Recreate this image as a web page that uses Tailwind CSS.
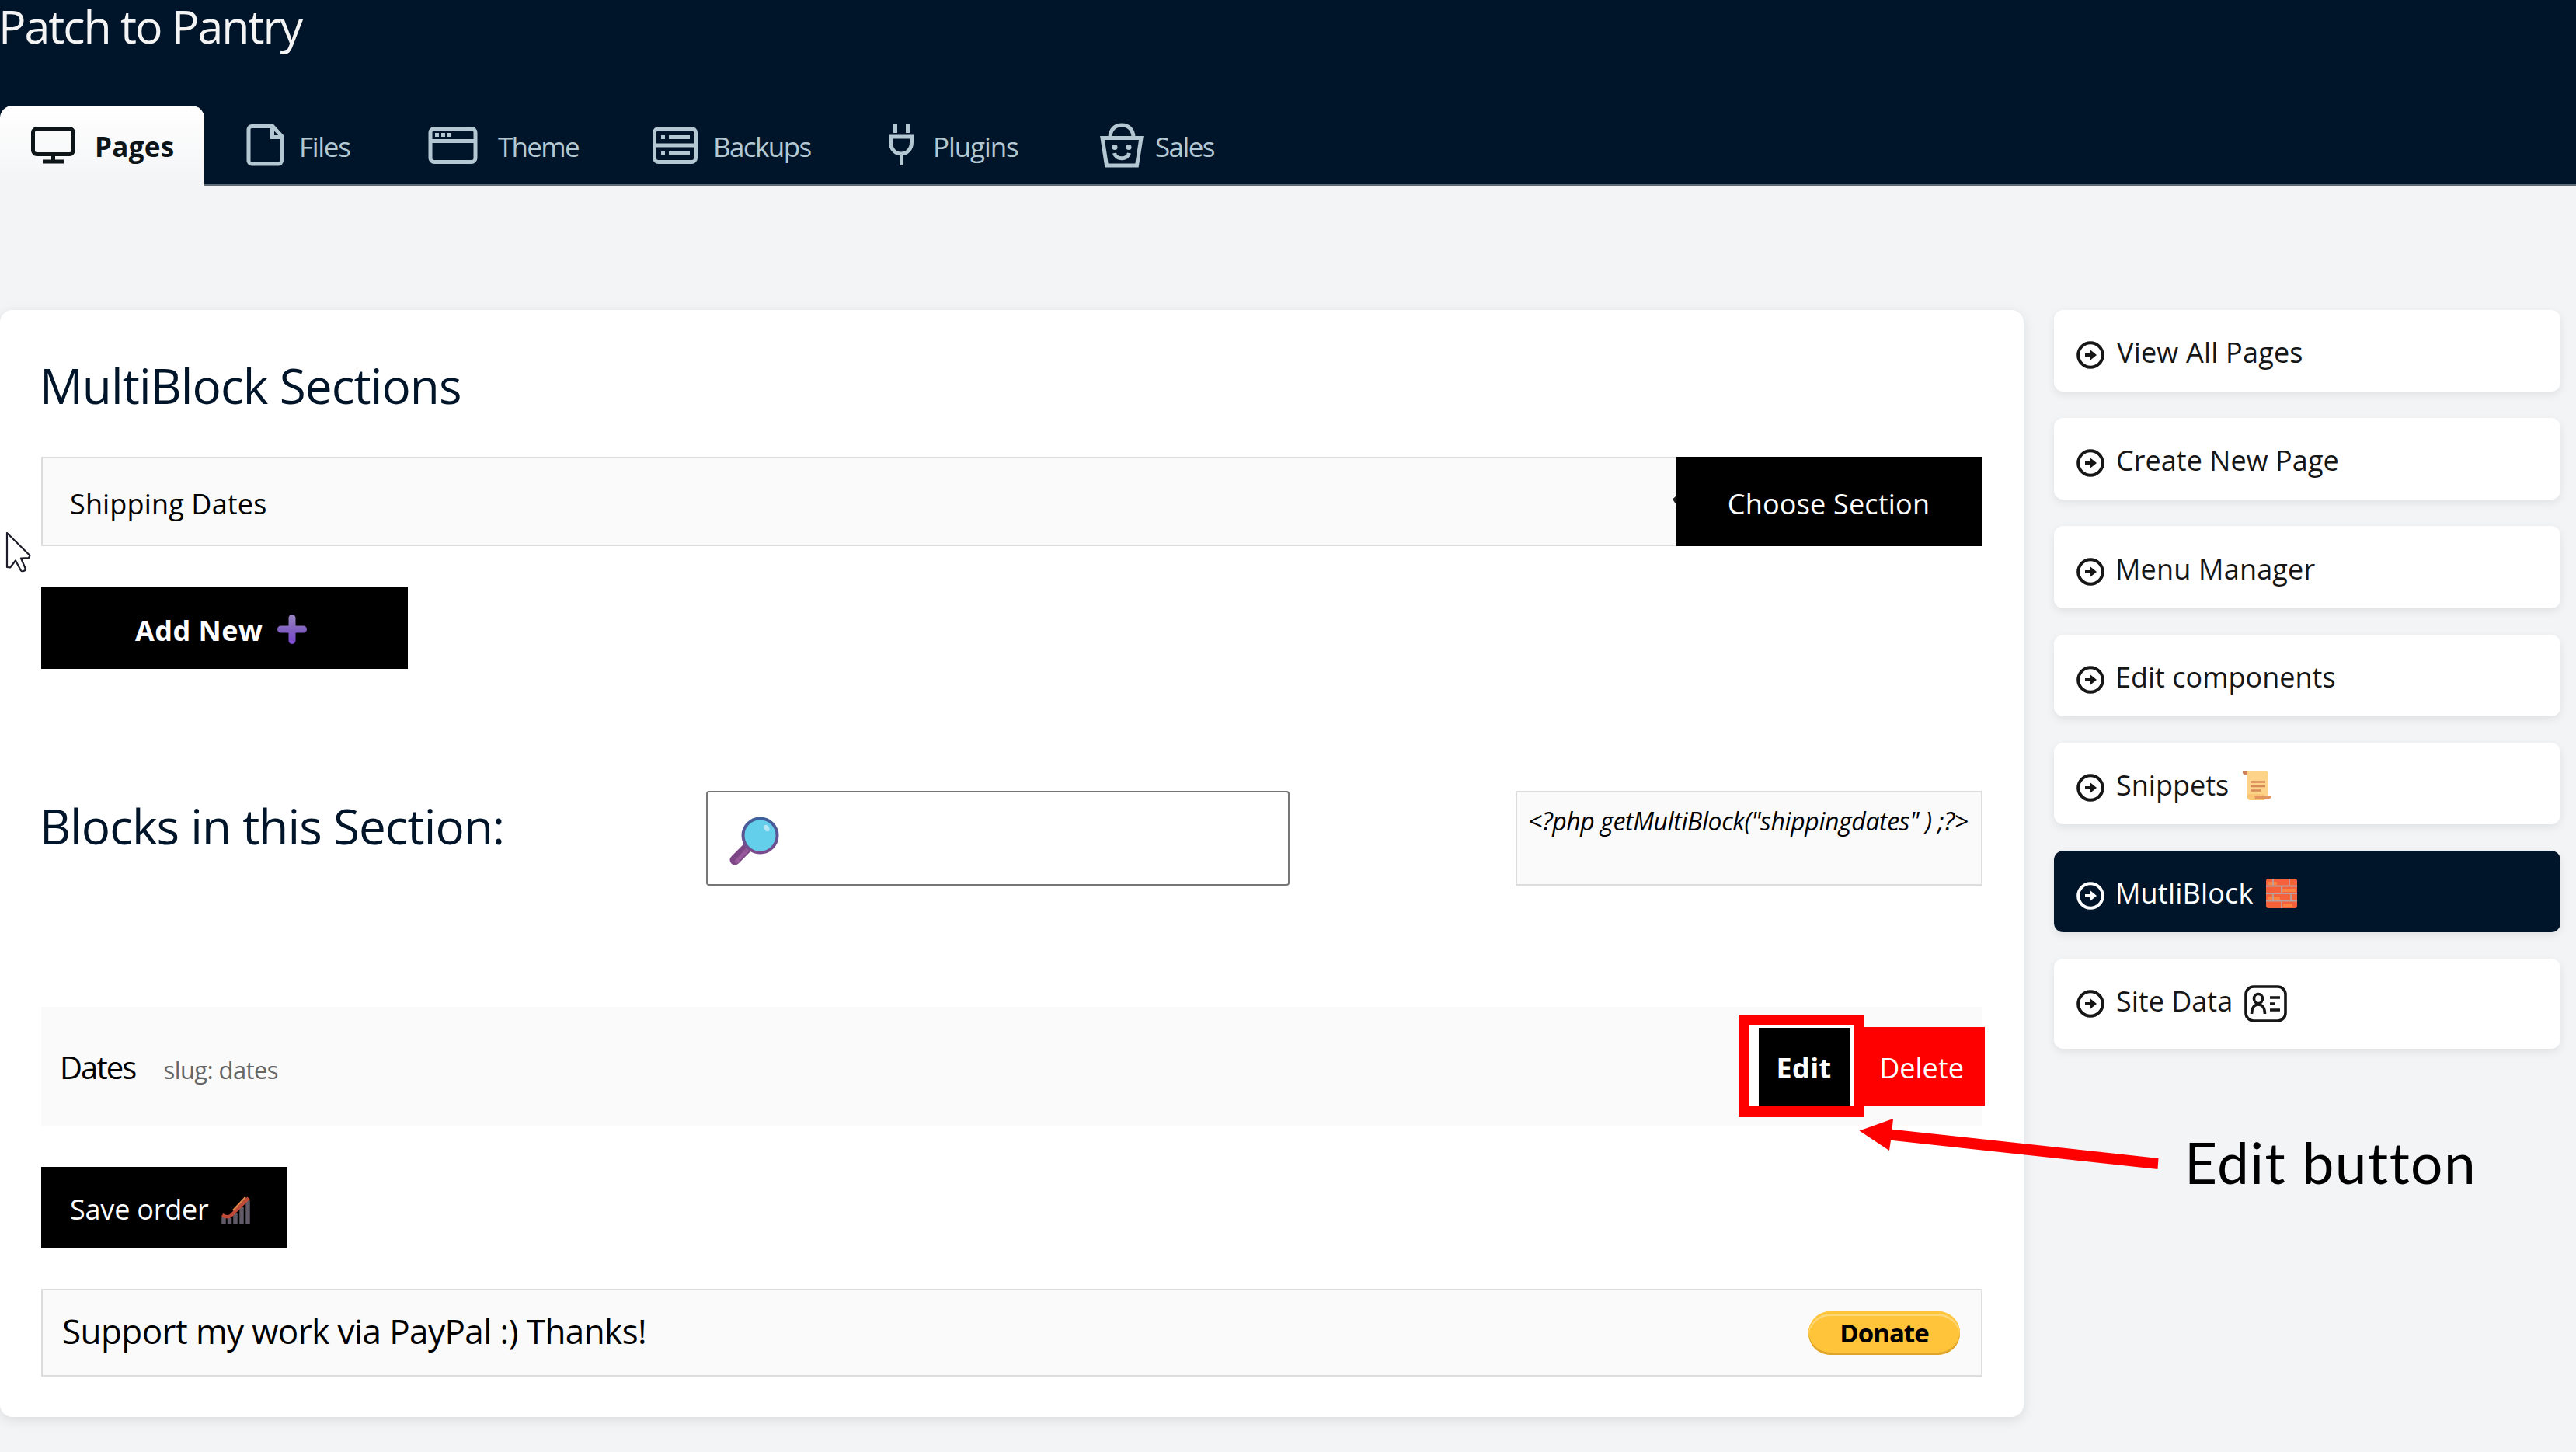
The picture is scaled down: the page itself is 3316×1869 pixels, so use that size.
<!DOCTYPE html>
<html lang="en">

<head>
    <meta charset="UTF-8">
    <meta name="viewport" content="width=device-width, initial-scale=1.0">
    <title>Patch to Pantry - MultiBlock</title>
    <script src="https://cdn.jsdelivr.net/npm/@tailwindcss/browser@4"></script>
</head>

<body class="relative w-[3316px] h-[1869px] overflow-hidden bg-[#f3f4f6] font-['Open_Sans','Noto_Sans',sans-serif] text-black whitespace-nowrap">

<!-- Header -->
<header class="flex flex-col justify-between h-[239px] bg-[#001529] border-b-2 border-[#5d6b79]">
    <h1 class="h-[70px] -ml-[2px] leading-[66px] text-[59px] tracking-[-2px] text-[#f4f4f4]">Patch to Pantry</h1>

    <nav class="flex items-end h-[102px] -mb-[2px] text-[35px] text-[#b3c8d2]">
        <a class="flex items-center w-[263px] h-[103px] pl-[39px] rounded-t-[16px] bg-linear-to-b from-white to-[#f3f4f6] text-[#0d1518] font-bold">
            <svg class="w-[59px] h-[48px] -mt-[2px]" viewBox="0 0 59 48" fill="none" stroke="currentColor" stroke-width="5">
                <rect x="3.5" y="2.5" width="52" height="33" rx="5"/>
                <path d="M29.500 36v8M16 45h27"/>
            </svg>
            <span class="ml-[24px] pt-[3px] tracking-[0.3px]">Pages</span>
        </a>
        <a class="flex items-center w-[236px] h-[103px] pl-[54px]">
            <svg class="w-[49px] h-[54px] -mt-[2px]" viewBox="0 0 49 54" fill="none" stroke="currentColor" stroke-width="5">
                <path d="M8 2.500h26L45.500 15v32a4 4 0 0 1-4 4H7a4 4 0 0 1-4-4V6.500a4 4 0 0 1 4-4z"/>
                <path d="M33.500 3v13.500h12"/>
            </svg>
            <span class="ml-[19px] pt-[3px] tracking-[-1.3px]">Files</span>
        </a>
        <a class="flex items-center w-[288px] h-[103px] pl-[52px]">
            <svg class="w-[64px] h-[48px] -mt-[2px]" viewBox="0 0 64 48" fill="none" stroke="currentColor" stroke-width="5">
                <rect x="3" y="2.500" width="58" height="43" rx="5"/>
                <path d="M3 18.500h58"/>
                <path d="M9 10.500h5M17 10.500h5M25 10.500h5"/>
            </svg>
            <span class="ml-[26px] pt-[3px] tracking-[-1.7px]">Theme</span>
        </a>
        <a class="flex items-center w-[298px] h-[103px] pl-[52px]">
            <svg class="w-[60px] h-[48px] -mt-[2px]" viewBox="0 0 60 48" fill="none" stroke="currentColor" stroke-width="5">
                <rect x="3.500" y="2.500" width="53" height="43" rx="5"/>
                <path d="M3 24h54"/>
                <path d="M12 13.500h5M22 13.500h27M12 34.500h5M22 34.500h27"/>
            </svg>
            <span class="ml-[19px] pt-[3px] tracking-[-1.6px]">Backups</span>
        </a>
        <a class="flex items-center w-[275px] h-[103px] pl-[58px]">
            <svg class="w-[34px] h-[54px] -mt-[2px]" viewBox="0 0 34 54" fill="none" stroke="currentColor" stroke-width="5">
                <path d="M9.500 0v11M25.500 0v11"/>
                <path d="M3.500 16h27v7c0 9-6 15-13.500 15S3.500 32 3.500 23z"/>
                <path d="M17.500 38v15"/>
            </svg>
            <span class="ml-[24px] pt-[3px] tracking-[-1.1px]">Plugins</span>
        </a>
        <a class="flex items-center h-[103px] pl-[55px]">
            <svg class="w-[58px] h-[58px] -mt-[2px]" viewBox="0 0 58 58" fill="none" stroke="currentColor" stroke-width="5">
                <path d="M4 19.500h50L48.500 55h-39z"/>
                <path d="M14 19C14 9 20 3 29 3s15 6 15 16"/>
                <path d="M19.500 39c2 9 17 9 19 0"/>
                <circle cx="20" cy="31.500" r="3.500" fill="currentColor" stroke="none"/>
                <circle cx="38" cy="31.500" r="3.500" fill="currentColor" stroke="none"/>
            </svg>
            <span class="ml-[14px] pt-[3px] tracking-[-1.6px]">Sales</span>
        </a>
    </nav>
</header>

<main class="flex items-start gap-[39px] pt-[160px]">
    <!-- Content panel -->
    <section class="w-[2605px] h-[1425px] px-[53px] rounded-[16px] bg-white shadow-[0_4px_16px_rgba(0,0,0,0.1)]">
        <h2 class="h-[189px] -ml-[2px] leading-[195px] text-[62px] tracking-[-0.9px] text-[#001529]">MultiBlock Sections</h2>

        <div class="flex h-[115px] text-[36px]">
            <div class="flex items-center flex-1 pl-[35px] pt-[7px] border-2 border-r-0 border-[#dcdcdc] bg-[#fafafa] tracking-[0.15px]">
                Shipping Dates
                <svg class="w-[5px] h-[12px] ml-auto -mt-[10px]" viewBox="0 0 5 12"><path d="M5 0L0 4.500 5 12z" fill="#222"/></svg>
            </div>
            <button class="w-[394px] pt-[6px] pr-[2px] bg-black text-white tracking-[0.2px]">Choose Section</button>
        </div>

        <button class="flex items-center w-[472px] h-[105px] mt-[53px] pl-[121px] bg-black text-white text-[36px] font-bold tracking-[0.45px]">
            <span class="pt-[6px]">Add New</span>
            <svg class="w-[38px] h-[38px] ml-[19px] mt-[3px]" viewBox="0 0 38 38">
                <defs>
                    <linearGradient id="plus" x1="0" y1="0" x2="0" y2="1">
                        <stop offset="0" stop-color="#9a86c4"/>
                        <stop offset="0.500" stop-color="#8262c0"/>
                        <stop offset="1" stop-color="#7a45cf"/>
                    </linearGradient>
                </defs>
                <path d="M19 0a4.500 4.500 0 0 1 4.500 4.500v10h10a4.500 4.500 0 0 1 0 9h-10v10a4.500 4.500 0 0 1-9 0v-10h-10a4.500 4.500 0 0 1 0-9h10v-10A4.500 4.500 0 0 1 19 0z" fill="url(#plus)"/>
            </svg>
        </button>

        <div class="flex h-[122px] mt-[157px]">
            <h2 class="w-[856px] -ml-[2px] leading-[91px] text-[62px] tracking-[-0.95px] text-[#001529]">Blocks in this Section:</h2>
            <!-- Search -->
            <div class="w-[751px] ml-[2px] pl-[28px] pt-[31px] border-[2.5px] border-[#767676] rounded-[4px] bg-white">
                <svg class="w-[65px] h-[63px]" viewBox="0 0 65 63">
                    <defs>
                        <linearGradient id="rim" x1="0" y1="0" x2="0" y2="1">
                            <stop offset="0" stop-color="#3f5f9c"/>
                            <stop offset="1" stop-color="#7b4a8c"/>
                        </linearGradient>
                    </defs>
                    <path d="M22 41L7 56" stroke="#7c4585" stroke-width="13" stroke-linecap="round"/>
                    <path d="M23 43L9 58" stroke="#97599a" stroke-width="5" stroke-linecap="round"/>
                    <circle cx="39.500" cy="24.500" r="22" fill="#63cfea" stroke="url(#rim)" stroke-width="4"/>
                    <ellipse cx="48" cy="15" rx="3" ry="4.500" fill="#b9e6f5" transform="rotate(-30 48 15)"/>
                </svg>
            </div>
            <div class="w-[601px] ml-auto pl-[14px] border-2 border-[#dcdcdc] bg-[#fafafa] leading-[74px] text-[32px] italic tracking-[-0.4px]">&lt;?php getMultiBlock("shippingdates" ) ;?&gt;</div>
        </div>

        <!-- Block row -->
        <div class="flex items-center h-[153px] mt-[156px] pl-[24px] bg-[#fafafa]">
            <span class="pt-[2px] text-[40px] tracking-[-1.9px]">Dates</span>
            <span class="ml-[36px] pt-[9px] text-[31px] tracking-[-0.6px] text-[#666666]">slug: dates</span>
            <div class="flex ml-auto -mr-[3px] h-[101px] text-white text-[36px]">
                <button class="w-[119px] pt-[5px] pr-[3px] bg-black font-bold tracking-[0.35px]">Edit</button>
                <button class="w-[172px] pt-[5px] pl-[9px] bg-[#ff0000]">Delete</button>
            </div>
        </div>

        <button class="flex items-center w-[317px] h-[105px] mt-[53px] pl-[37px] bg-black text-white text-[36px] tracking-[-0.2px]">
            <span class="pt-[5px]">Save order</span>
            <svg class="w-[39px] h-[36px] ml-[16px] mt-[6px]" viewBox="0 0 39 36">
                <path d="M3 27v9M10.500 28v8M18 22v14M26 14v22M34 5v31" stroke="#5f5a66" stroke-width="5.500"/>
                <path d="M1 24c5 3 9 3 12 0L35 2" fill="none" stroke="#c04a38" stroke-width="4.500"/>
                <path d="M15 18L31 1" stroke="#e0834b" stroke-width="2.500"/>
            </svg>
        </button>

        <div class="flex items-center h-[113px] mt-[52px] pl-[25px] pr-[27px] border-2 border-[#dcdcdc] bg-[#fafafa]">
            <span class="-mt-[5px] text-[44px] tracking-[-0.58px]">Support my work via PayPal :) Thanks!</span>
            <button class="w-[195px] h-[56px] ml-auto rounded-full bg-[#ffc439] leading-[52px] text-[33px] font-bold tracking-[-1px] shadow-[inset_0_-3px_0_#dfa52b,inset_0_3px_0_#ffc439,inset_0_6px_0_#ffd778]">Donate</button>
        </div>
    </section>

    <!-- Sidebar -->
    <aside class="flex flex-col gap-[34px] w-[652px] text-[36px] text-[#161616]">
        <svg class="hidden">
            <symbol id="arrow" viewBox="0 0 36 36">
                <circle cx="18" cy="18" r="15.800" fill="none" stroke="currentColor" stroke-width="4"/>
                <path d="M11 16h7v-4.500l8 6.500-8 6.500V20h-7z" fill="currentColor"/>
            </symbol>
        </svg>
        <a class="flex items-center h-[105px] pl-[29px] pt-[5px] rounded-[12px] bg-white shadow-[0_4px_12px_rgba(0,0,0,0.08)] tracking-[0.2px]">
            <svg class="w-[36px] h-[36px] mt-[6px] mr-[16px]"><use href="#arrow"/></svg>View All Pages
        </a>
        <a class="flex items-center h-[105px] pl-[29px] pt-[5px] rounded-[12px] bg-white shadow-[0_4px_12px_rgba(0,0,0,0.08)] tracking-[0.05px]">
            <svg class="w-[36px] h-[36px] mt-[6px] mr-[15px]"><use href="#arrow"/></svg>Create New Page
        </a>
        <a class="flex items-center h-[106px] pl-[29px] pt-[5px] rounded-[12px] bg-white shadow-[0_4px_12px_rgba(0,0,0,0.08)] tracking-[0.2px]">
            <svg class="w-[36px] h-[36px] mt-[6px] mr-[14px]"><use href="#arrow"/></svg>Menu Manager
        </a>
        <a class="flex items-center h-[105px] pl-[29px] pt-[4px] rounded-[12px] bg-white shadow-[0_4px_12px_rgba(0,0,0,0.08)]">
            <svg class="w-[36px] h-[36px] mt-[6px] mr-[14px]"><use href="#arrow"/></svg>Edit components
        </a>
        <a class="flex items-center h-[105px] pl-[29px] pt-[4px] rounded-[12px] bg-white shadow-[0_4px_12px_rgba(0,0,0,0.08)]">
            <svg class="w-[36px] h-[36px] mt-[6px] mr-[15px]"><use href="#arrow"/></svg>Snippets
            <svg class="w-[38px] h-[38px] ml-[17px]" viewBox="0 0 38 38">
                <path d="M3 0h27a4 4 0 0 1 4 4v28H7V7z" fill="#fdd38a"/>
                <path d="M1 1.500a3 3 0 0 1 6 0V5H3a3 3 0 0 1-2-3.500z" fill="#d0805a"/>
                <path d="M7 30h22v8H11a4 4 0 0 1-4-4z" fill="#fbc676"/>
                <path d="M16 32h22a5 5 0 0 1-5 5H17z" fill="#e2955f"/>
                <path d="M11 14.500h19M11 20h19M11 25.500h13" stroke="#d68a58" stroke-width="2.600"/>
            </svg>
        </a>
        <a class="flex items-center h-[105px] pl-[29px] pt-[4px] rounded-[12px] bg-[#001529] text-white shadow-[0_4px_12px_rgba(0,0,0,0.08)] tracking-[0.2px]">
            <svg class="w-[36px] h-[36px] mt-[6px] mr-[14px]"><use href="#arrow"/></svg>MutliBlock
            <svg class="w-[40px] h-[38px] ml-[16px]" viewBox="0 0 40 38">
                <rect width="40" height="38" rx="3" fill="#f4613a"/>
                <path d="M2 6h12M20 15h18M2 25h16M22 34h12" stroke="#fb8540" stroke-width="4"/>
                <path d="M0 9.500h40M0 19h40M0 28.500h40M9 0v9.500M30 0v9.500M20 9.500V19M9 19v9.500M32 19v9.500M20 28.500V38" stroke="#b9a09c" stroke-width="1.800"/>
            </svg>
        </a>
        <a class="flex items-center h-[116px] pl-[29px] pb-[6px] rounded-[12px] bg-white shadow-[0_4px_12px_rgba(0,0,0,0.08)]">
            <svg class="w-[36px] h-[36px] mt-[6px] mr-[15px]"><use href="#arrow"/></svg>Site Data
            <svg class="w-[55px] h-[48px] ml-[15px] mt-[5px]" viewBox="0 0 55 48" fill="none" stroke="currentColor" stroke-width="3.600">
                <rect x="2" y="2" width="51" height="44" rx="10"/>
                <ellipse cx="18" cy="17.500" rx="5.500" ry="6"/>
                <path d="M9.500 37c0-8 3.500-12 8.500-12s8.500 4 8.500 12"/>
                <path d="M33 16h13M33 24h7M33 32h13"/>
            </svg>
        </a>
    </aside>
</main>

<!-- Mouse pointer -->
<svg class="absolute left-[7px] top-[684px] w-[34px] h-[53px]" viewBox="0 0 34 53">
    <path d="M2 2v44l4 .500 7-9 7 13c1 1.500 6 .500 6-2l-6-14 10-.500 1.500-3z" fill="#fff" stroke="#1c1c2b" stroke-width="2.200" stroke-linejoin="round"/>
</svg>

<!-- Edit callout -->
<div class="absolute left-[2238px] top-[1306px] w-[162px] h-[132px] border-[14px] border-[#ff0000]">
    <div class="absolute left-0 top-0 w-[11px] h-[104px] bg-white"></div>
    <div class="absolute right-0 top-0 w-[4px] h-[104px] bg-white"></div>
    <div class="absolute left-0 top-0 w-[134px] h-[3px] bg-white"></div>
</div>
<svg class="absolute left-[2380px] top-[1430px] w-[410px] h-[90px]" viewBox="2380 1430 410 90">
    <path d="M2393.500 1455.500L2437 1440l-1.400 13.700L2778.500 1491l-1 14L2434 1467.700l-2 13.300z" fill="#ff0000"/>
</svg>
<div class="absolute left-[2812px] top-[1446px] leading-[100px] font-['Lato','Open_Sans',sans-serif] text-[73px] tracking-[1.5px]">Edit button</div>

</body>

</html>
